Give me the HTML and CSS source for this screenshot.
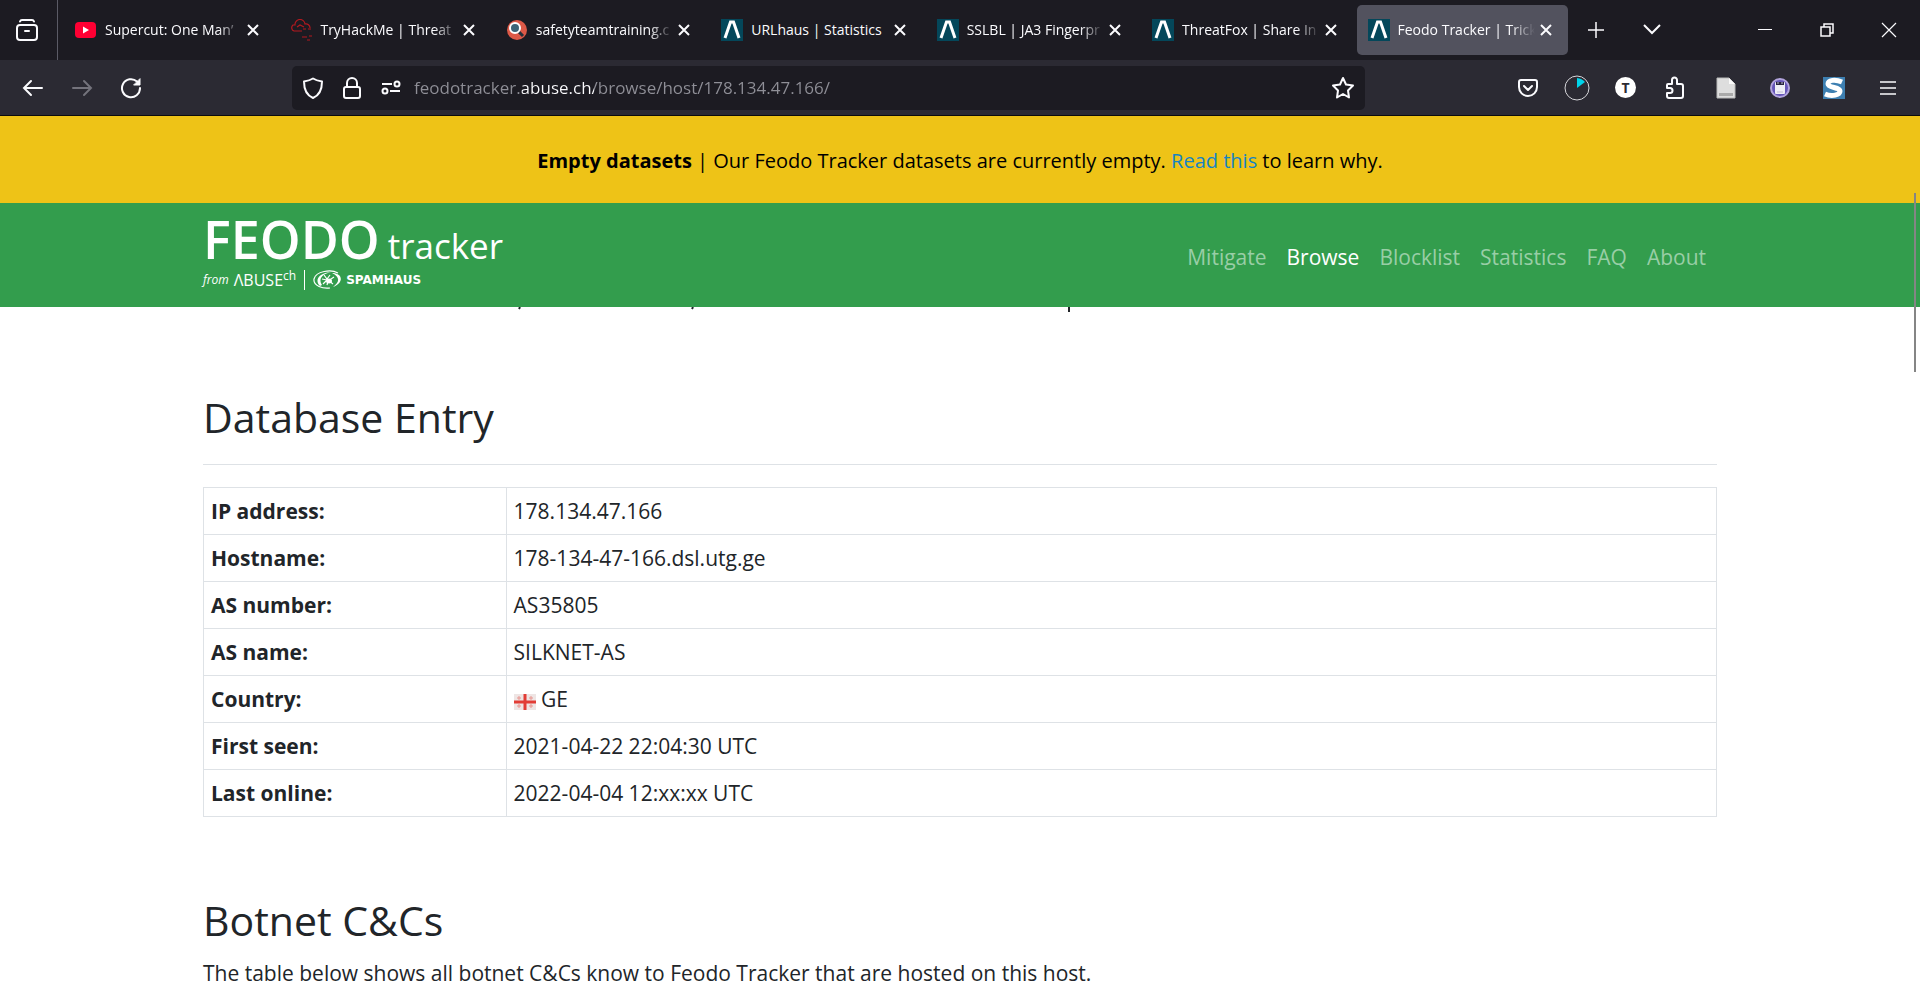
FILE: index.html
```html
<!DOCTYPE html>
<html lang="en">
<head>
    <meta charset="UTF-8">
    <meta name="viewport" content="width=device-width, initial-scale=1.0">
    <title>Feodo Tracker | Browse</title>
    <link rel="stylesheet" href="styles.css">
</head>
<body>

    <!-- shared shapes -->
    <svg width="0" height="0" class="defs" aria-hidden="true">
        <symbol id="abuse" viewBox="0 0 22 22">
            <rect width="22" height="22" fill="#04475a"/>
            <path d="M4 19 9.500 3h3L18 19" fill="none" stroke="#fff" stroke-width="3"/>
        </symbol>
        <symbol id="x" viewBox="0 0 12 12">
            <path d="M1 1l10 10M11 1L1 11" fill="none" stroke="currentColor" stroke-width="2"/>
        </symbol>
    </svg>

    <div class="browser">
        <div class="tab-bar">
            <button class="view-btn" aria-label="Firefox View">
                <svg width="24" height="24" viewBox="0 0 24 24" fill="none" stroke="currentColor" stroke-width="2" stroke-linecap="round"><rect x="2" y="7" width="20" height="15" rx="3"/><path d="M5 3.500Q5.500 2 7 2h10q1.500 0 2 1.500M10 13h4"/></svg>
            </button>
            <div class="tabs">
                <div class="tab">
                    <svg width="22" height="22" viewBox="0 0 22 22"><rect y="3" width="21" height="16" rx="4" fill="#ff0033"/><path d="M8 7.500v7l6-3.500z" fill="#fff"/></svg>
                    <span class="tab-label">Supercut: One Man’</span>
                    <button class="tab-close" aria-label="Close tab"><svg width="12" height="12"><use href="#x"/></svg></button>
                </div>
                <div class="tab">
                    <svg width="22" height="22" viewBox="0 0 22 22" fill="none" stroke="#b3191f" stroke-width="1.200"><path d="M12 12H4a3.500 3.500 0 0 1-1-6h2a5 5 0 0 1 10-1 4 4 0 0 1 5 4"/><path d="M7 8l3-2 4 2M13 10h3M18 10h3M12 18h5M19 17h3M17 21h3"/></svg>
                    <span class="tab-label">TryHackMe | Threat</span>
                    <button class="tab-close" aria-label="Close tab"><svg width="12" height="12"><use href="#x"/></svg></button>
                </div>
                <div class="tab">
                    <svg width="22" height="22" viewBox="0 0 22 22"><circle cx="11" cy="11" r="10" fill="#dd5947"/><path d="M12 12l5 5" stroke="#23313c" stroke-width="3"/><circle cx="9" cy="9" r="5" fill="#3c6478" stroke="#fff" stroke-width="2"/></svg>
                    <span class="tab-label">safetyteamtraining.c</span>
                    <button class="tab-close" aria-label="Close tab"><svg width="12" height="12"><use href="#x"/></svg></button>
                </div>
                <div class="tab">
                    <svg width="22" height="22"><use href="#abuse"/></svg>
                    <span class="tab-label short">URLhaus | Statistics</span>
                    <button class="tab-close" aria-label="Close tab"><svg width="12" height="12"><use href="#x"/></svg></button>
                </div>
                <div class="tab">
                    <svg width="22" height="22"><use href="#abuse"/></svg>
                    <span class="tab-label">SSLBL | JA3 Fingerpr</span>
                    <button class="tab-close" aria-label="Close tab"><svg width="12" height="12"><use href="#x"/></svg></button>
                </div>
                <div class="tab">
                    <svg width="22" height="22"><use href="#abuse"/></svg>
                    <span class="tab-label">ThreatFox | Share In</span>
                    <button class="tab-close" aria-label="Close tab"><svg width="12" height="12"><use href="#x"/></svg></button>
                </div>
                <div class="tab active">
                    <svg width="22" height="22"><use href="#abuse"/></svg>
                    <span class="tab-label">Feodo Tracker | Trick</span>
                    <button class="tab-close" aria-label="Close tab"><svg width="12" height="12"><use href="#x"/></svg></button>
                </div>
            </div>
            <div class="tab-tools">
                <button aria-label="New tab"><svg width="18" height="18" viewBox="0 0 18 18" stroke="currentColor" stroke-width="1.500"><path d="M9 1v16M1 9h16"/></svg></button>
                <button aria-label="List all tabs"><svg width="18" height="18" viewBox="0 0 18 18" fill="none" stroke="currentColor" stroke-width="2"><path d="M1 4l8 8 8-8"/></svg></button>
            </div>
            <div class="window-tools">
                <button aria-label="Minimize"><svg width="16" height="16" viewBox="0 0 16 16" stroke="currentColor"><path d="M1 7.500h14"/></svg></button>
                <button aria-label="Restore"><svg width="16" height="16" viewBox="0 0 16 16" fill="none" stroke="currentColor" stroke-width="1.500"><path d="M2 5h9v9H2zM5 5V2h9v9h-3"/></svg></button>
                <button aria-label="Close"><svg width="16" height="16" viewBox="0 0 16 16" stroke="currentColor" stroke-width="1.200"><path d="M1 1l14 14M15 1L1 15"/></svg></button>
            </div>
        </div>

        <div class="toolbar">
            <div class="nav-buttons">
                <button aria-label="Back"><svg width="22" height="22" viewBox="0 0 22 22" fill="none" stroke="currentColor" stroke-width="2" stroke-linecap="round"><path d="M20 11H2M9 4l-7 7 7 7"/></svg></button>
                <button class="dim" aria-label="Forward"><svg width="22" height="22" viewBox="0 0 22 22" fill="none" stroke="currentColor" stroke-width="2" stroke-linecap="round"><path d="M2 11h18M13 4l7 7-7 7"/></svg></button>
                <button aria-label="Reload"><svg width="22" height="22" viewBox="0 0 22 22" fill="none" stroke="currentColor" stroke-width="2" stroke-linecap="round"><path d="M20 11a9 9 0 1 1-3-6.500"/><path d="M20 2v6h-6z" fill="currentColor" stroke-width="1"/></svg></button>
            </div>
            <div class="url-bar">
                <svg width="22" height="22" viewBox="0 0 22 22" fill="none" stroke="currentColor" stroke-width="2" stroke-linejoin="round"><path d="M11 1.500c3 2 6 2.500 9 3C20 12 18 18 11 21 4 18 2 12 2 4.500c3-.5 6-1 9-3z"/></svg>
                <svg width="22" height="22" viewBox="0 0 22 22" fill="none" stroke="currentColor" stroke-width="2"><rect x="3" y="10" width="16" height="11" rx="2"/><path d="M6 10V6a5 5 0 0 1 10 0v4"/></svg>
                <svg width="22" height="22" viewBox="0 0 22 22" fill="none" stroke="currentColor" stroke-width="2"><circle cx="17" cy="7" r="2.500"/><path d="M2 7h10M10 14h10"/><circle cx="5" cy="14" r="2.500"/></svg>
                <input class="url" type="text" aria-label="Address" value="feodotracker.abuse.ch/browse/host/178.134.47.166/">
                <button aria-label="Bookmark this page"><svg width="24" height="24" viewBox="0 0 24 24" fill="none" stroke="currentColor" stroke-width="2" stroke-linejoin="round"><path d="M12 2l3 6.500 7 1-5 5 1 7-6-3.500-6 3.500 1-7-5-5 7-1z"/></svg></button>
            </div>
            <div class="extensions">
                <button class="ext" aria-label="Pocket"><svg width="22" height="22" viewBox="0 0 22 22" fill="none" stroke="currentColor" stroke-width="2" stroke-linecap="round" stroke-linejoin="round"><path d="M4 3h14q2 0 2 2v5a9 9 0 0 1-18 0V5q0-2 2-2z"/><path d="M7 9l4 4 4-4"/></svg></button>
                <button class="ext" aria-label="Timer"><svg width="26" height="26" viewBox="0 0 26 26"><circle cx="13" cy="13" r="12" fill="none" stroke="#d6d6da"/><path d="M13 13V3q5 .5 8 4z" fill="#00d4ea"/></svg></button>
                <button class="ext" aria-label="Account"><span class="avatar">T</span></button>
                <button class="ext" aria-label="Extensions"><svg width="22" height="24" viewBox="0 0 22 24" fill="none" stroke="currentColor" stroke-width="2" stroke-linejoin="round"><path d="M4 8h4V4a2.500 2.500 0 0 1 5 0v4h4q2 0 2 2v10q0 2-2 2H5q-2 0-2-2v-3h3a2.500 2.500 0 0 0 0-5H3V9q0-1 1-1z"/></svg></button>
                <button class="ext wide" aria-label="Notes"><svg width="20" height="22" viewBox="0 0 20 22"><path d="M1 1h12l6 6v14H1z" fill="#dedede" stroke="#b9b9b9"/><path d="M13 1v6h6z" fill="#fafafa"/><path d="M3 16h14v3H3z" fill="#aaa"/></svg></button>
                <button class="ext wide" aria-label="Robot"><svg width="20" height="20" viewBox="0 0 20 20"><circle cx="10" cy="10" r="9" fill="#6656b8" stroke="#b2a4dd" stroke-width="2"/><rect x="5" y="4" width="10" height="12" rx="1" fill="#eeeef6"/><path d="M6 4h8v3H6z" fill="#292540"/><path d="M7 5h2M11 5h2M7 14h6" stroke="#c2bdd5"/></svg></button>
                <button class="ext wide" aria-label="Stylus"><svg width="22" height="22" viewBox="0 0 22 22"><rect width="22" height="22" fill="#3d7fb1"/><path d="M19 5C12 2 5 3 5 7s12 3 12 7-8 6-15 3" fill="none" stroke="#fff" stroke-width="5"/></svg></button>
                <button class="ext wide" aria-label="Menu"><svg width="16" height="16" viewBox="0 0 16 16" stroke="currentColor" stroke-width="1.500"><path d="M0 2h16M0 8h16M0 14h16"/></svg></button>
            </div>
        </div>
    </div>

    <div class="page">
        <div class="banner">
            <p><strong>Empty datasets</strong> | Our Feodo Tracker datasets are currently empty. <a href="#">Read this</a> to learn why.</p>
        </div>

        <header class="site-header">
            <div class="container header-inner">
                <a class="brand" href="#" aria-label="Feodo Tracker">
                    <span class="brand-top"><span class="brand-feodo">FEODO</span><span class="brand-tracker">tracker</span></span>
                    <span class="brand-bottom">
                        <em>from</em>
                        <span class="brand-abuse">ΛBUSE<sup>ch</sup></span>
                        <svg class="spider" width="30" height="20" viewBox="0 0 30 20" fill="none" stroke="#fff"><path d="M25 3C18-1 3 1 1 9c-1 7 9 10 16 9" stroke-width="1.200"/><path d="M7 16C1 10 6 3 18 2 9 4 5 9 9 15zM19 3c10 0 13 9 1 14 7-5 7-10-1-14z" fill="#fff" stroke="none"/><path d="M11 5l3 4 3-4M9 9l5 1-4 4M14 15l1-4 6-4M20 14l-5-4" stroke-width="1.200"/><ellipse cx="16" cy="11" rx="3" ry="2.500" fill="#fff" stroke="none"/></svg>
                        <span class="brand-spamhaus">SPAMHAUS</span>
                    </span>
                </a>
                <nav class="site-nav">
                    <a href="#">Mitigate</a>
                    <a href="#" class="current">Browse</a>
                    <a href="#">Blocklist</a>
                    <a href="#">Statistics</a>
                    <a href="#">FAQ</a>
                    <a href="#">About</a>
                </nav>
            </div>
        </header>

        <main class="container">
            <!-- tail of the scrolled intro line, the rest is under the header -->
            <svg class="intro-tail" width="1514" height="5" viewBox="0 0 1514 5" aria-hidden="true"><path d="M317 0l-1 2M490 0l-1 2M866 0v5" stroke="#212529" stroke-width="2"/></svg>

            <h2>Database Entry</h2>
            <hr>
            <table class="entry">
                <tr><th scope="row">IP address:</th><td>178.134.47.166</td></tr>
                <tr><th scope="row">Hostname:</th><td>178-134-47-166.dsl.utg.ge</td></tr>
                <tr><th scope="row">AS number:</th><td>AS35805</td></tr>
                <tr><th scope="row">AS name:</th><td>SILKNET-AS</td></tr>
                <tr><th scope="row">Country:</th><td><svg class="flag" width="22" height="16" viewBox="0 0 22 16"><rect width="22" height="16" fill="#eee5e4"/><path d="M11 0v16M0 8h22" stroke="#e23d36" stroke-width="3"/><path d="M3 4h4M5 2v4M15 4h4M17 2v4M3 12h4M5 10v4M15 12h4M17 10v4" stroke="#e9958f"/></svg> GE</td></tr>
                <tr><th scope="row">First seen:</th><td>2021-04-22 22:04:30 UTC</td></tr>
                <tr><th scope="row">Last online:</th><td>2022-04-04 12:xx:xx UTC</td></tr>
            </table>

            <h2>Botnet C&amp;Cs</h2>
            <p>The table below shows all botnet C&amp;Cs know to Feodo Tracker that are hosted on this host.</p>
        </main>
        <div class="scroll-thumb"></div>
    </div>

</body>
</html>
```
FILE: styles.css
```css
* {
    box-sizing: border-box;
}
body {
    margin: 0;
    font-family: "Open Sans", "Noto Sans", sans-serif;
    font-size: 21px;
    line-height: 32px;
    color: #212529;
    background-color: #fff;
}
button {
    display: flex;
    flex-shrink: 0;
    align-items: center;
    justify-content: center;
    padding: 0;
    border: none;
    background: none;
    color: inherit;
    font-family: inherit;
}
.defs {
    position: absolute;
}

/* browser window */
.browser {
    color: #fbfbfe;
    border-bottom: 1px solid #0c0c0d;
}
.tab-bar {
    display: flex;
    height: 60px;
    background-color: #1c1b22;
}
.view-btn {
    width: 58px;
    border-right: 1px solid #5b5b66;
    padding-right: 4px;
}
.tabs {
    display: flex;
    flex: 1;
    gap: 4px;
    min-width: 0;
    padding: 5px 0 5px 6px;
}
.tab {
    display: flex;
    flex: 1;
    align-items: center;
    min-width: 0;
    padding: 0 11px;
    border-radius: 5px;
}
.tab.active {
    background-color: #52525e;
}
.tab svg {
    flex-shrink: 0;
}
.tab-label {
    flex: 1;
    margin-left: 8px;
    overflow: hidden;
    white-space: nowrap;
    font-size: 14px;
    line-height: 24px;
    mask-image: linear-gradient(to left, transparent, #000 24px);
}
.tab-label.short {
    mask-image: none;
}
.tab-close {
    width: 22px;
    height: 22px;
}
.tab-tools {
    display: flex;
    flex-shrink: 0;
    width: 166px;
}
.tab-tools button {
    width: 56px;
}
.window-tools {
    display: flex;
    flex-shrink: 0;
}
.window-tools button {
    width: 62px;
}
.toolbar {
    display: flex;
    align-items: center;
    height: 55px;
    background-color: #2b2a33;
}
.nav-buttons {
    display: flex;
    width: 292px;
    padding-left: 8px;
}
.nav-buttons button {
    width: 49px;
}
.dim {
    color: #74737c;
}
.url-bar {
    display: flex;
    flex: 1;
    align-items: center;
    gap: 17px;
    height: 44px;
    padding: 0 10px;
    border-radius: 5px;
    background-color: #1c1b22;
}
.url {
    flex: 1;
    min-width: 0;
    margin-left: -5px;
    padding: 0;
    border: none;
    outline: none;
    font-family: inherit;
    font-size: 17px;
    line-height: 28px;
    /* the domain stands out from the rest of the address */
    color: transparent;
    background: linear-gradient(to right, #8f8f97 108px, #fbfbfe 108px, #fbfbfe 180px, #8f8f97 180px);
    background-clip: text;
}
.extensions {
    display: flex;
    justify-content: flex-end;
    width: 555px;
    padding-right: 5px;
}
.ext {
    width: 49px;
    height: 40px;
}
.ext.wide {
    width: 54px;
}
.avatar {
    width: 21px;
    border-radius: 50%;
    background-color: #fff;
    color: #2b2a33;
    font-size: 14px;
    font-weight: 700;
    line-height: 21px;
}

/* page */
.banner {
    padding: 29px 0 26px;
    background-color: #eec317;
    color: #000;
    font-size: 20px;
    text-align: center;
}
.banner p {
    margin: 0;
}
.banner a {
    color: #1583c4;
    text-decoration: none;
}
.container {
    width: 100%;
    max-width: 1514px;
    margin: 0 auto;
}
.site-header {
    background-color: #339d4d;
}
.header-inner {
    display: flex;
    align-items: center;
    justify-content: space-between;
    height: 104px;
}
.brand {
    padding-bottom: 6px;
    color: #fff;
    text-decoration: none;
}
.brand-top {
    display: flex;
    align-items: baseline;
    gap: 8px;
    line-height: 48px;
}
.brand-feodo {
    font-size: 52px;
    font-weight: 600;
}
.brand-tracker {
    font-size: 35px;
}
.brand-bottom {
    display: flex;
    align-items: center;
    height: 20px;
    font-size: 12px;
    line-height: 20px;
}
.brand-abuse {
    margin-left: 5px;
    padding-right: 8px;
    border-right: 1px solid #fff;
    font-size: 16px;
}
.brand-abuse sup {
    font-size: 12px;
    line-height: 0;
}
.spider {
    margin: 0 3px 0 8px;
}
.brand-spamhaus {
    font-family: "DejaVu Sans", sans-serif;
    font-size: 12px;
    font-weight: 700;
}
.site-nav {
    display: flex;
    gap: 20px;
    padding-top: 4px;
    padding-right: 11px;
}
.site-nav a {
    color: #99cea6;
    text-decoration: none;
}
.site-nav a.current {
    color: #fff;
}
.intro-tail {
    display: block;
    max-width: 100%;
    margin-bottom: 78px;
}
h2 {
    margin: 76px 0 10px;
    font-size: 41px;
    font-weight: 400;
    line-height: 54px;
}
.intro-tail + h2 {
    margin-top: 0;
}
hr {
    margin: 20px 0 22px;
    border: none;
    border-top: 1px solid #dee2e6;
}
.entry {
    width: 100%;
    border-collapse: collapse;
}
.entry th,
.entry td {
    height: 47px;
    padding: 7px;
    border: 1px solid #dee2e6;
    text-align: left;
}
.entry th {
    width: 20%;
    font-weight: 700;
}
.flag {
    vertical-align: -3px;
}
main p {
    margin: 0;
}
.scroll-thumb {
    position: absolute;
    top: 193px;
    right: 4px;
    width: 2px;
    height: 179px;
    background-color: #858585;
}
```
